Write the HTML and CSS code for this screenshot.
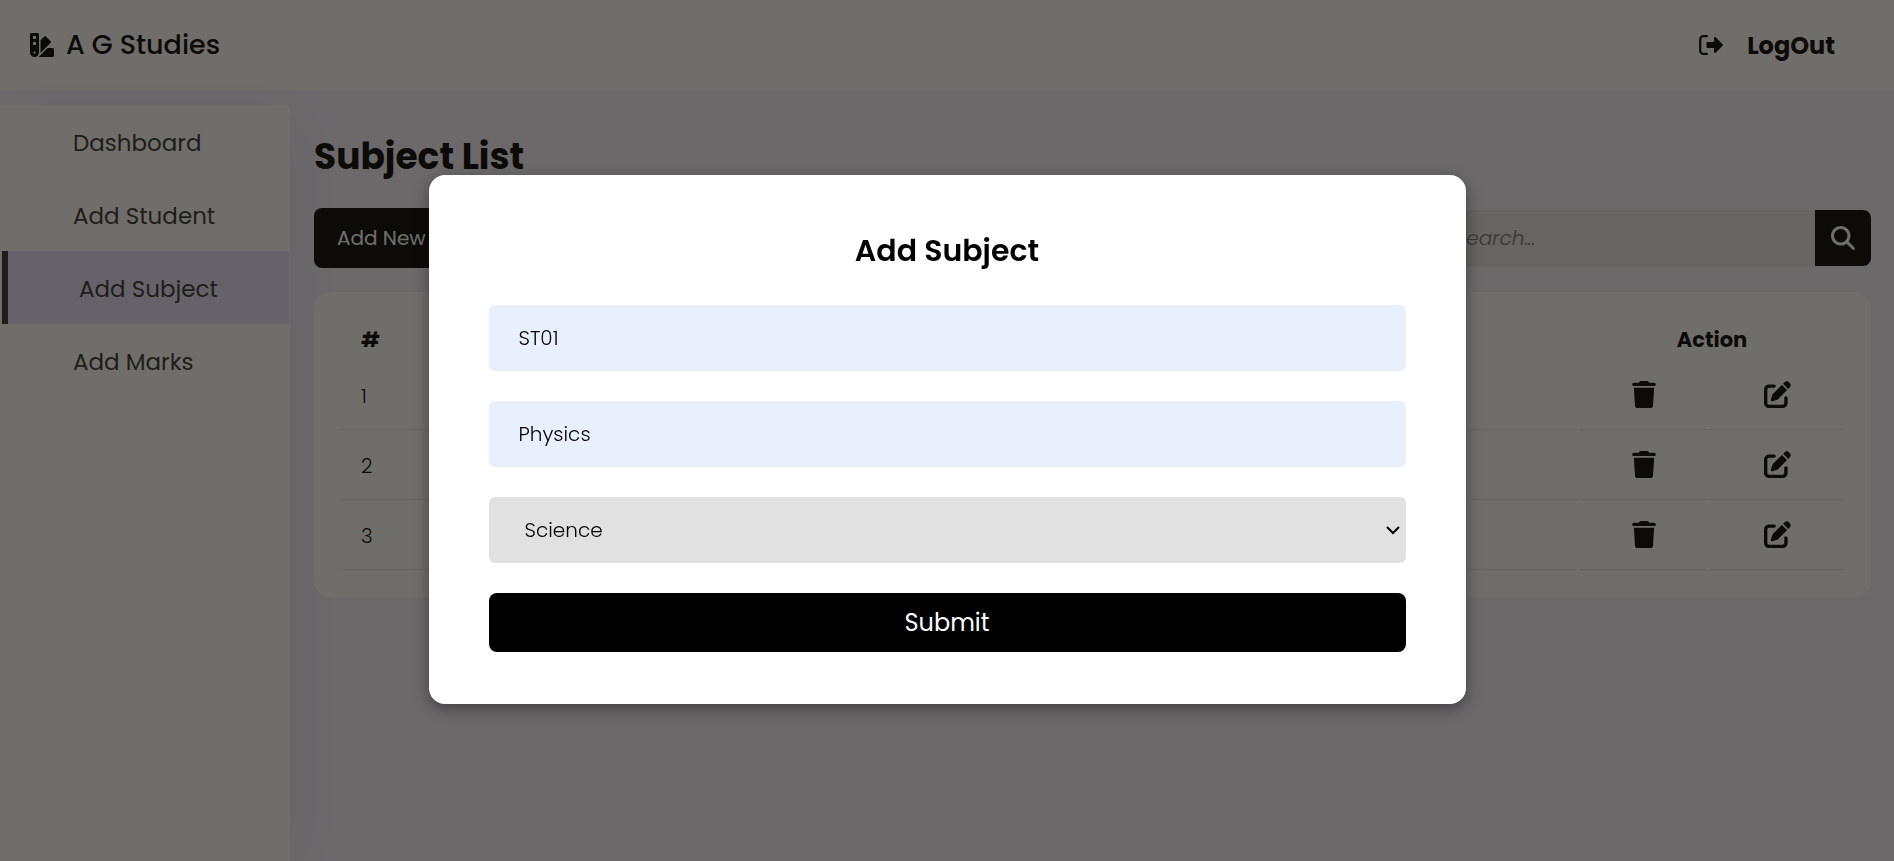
FILE: index.html
```html
<!DOCTYPE html>
<html lang="en">
<head>
<meta charset="utf-8">
<meta name="viewport" content="width=device-width, initial-scale=1">
<title>A G Studies</title>
<link rel="stylesheet" href="styles.css">
</head>
<body>
<svg class="sprite" aria-hidden="true">
  <symbol id="swatchbook" viewBox="0 0 512 512"><path d="M0 32C0 14.300 14.300 0 32 0H160c17.700 0 32 14.300 32 32V416c0 53-43 96-96 96s-96-43-96-96V32zM223.600 425.900c.3-3.300 .4-6.600 .4-9.900V154l75.400-75.400c12.500-12.500 32.800-12.500 45.300 0l90.500 90.500c12.500 12.500 12.500 32.800 0 45.300L223.600 425.900zM182.800 512l192-192H480c17.700 0 32 14.300 32 32V480c0 17.700-14.300 32-32 32H182.800zM128 64H64v64h64V64zM64 192v64h64V192H64zM96 440a24 24 0 1 0 0-48 24 24 0 1 0 0 48z"/></symbol>
  <symbol id="logout" viewBox="0 0 512 512"><path d="M505 273c9.400-9.400 9.400-24.600 0-34L361 95c-15-15-41-4.500-41 17v80H184c-13.300 0-24 10.700-24 24v80c0 13.300 10.700 24 24 24h136v80c0 21.500 26 32 41 17l144-144z"/><path d="M168 66H96a70 70 0 0 0-70 70v240a70 70 0 0 0 70 70h72" fill="none" stroke="currentColor" stroke-width="48" stroke-linecap="round"/></symbol>
  <symbol id="search" viewBox="0 0 512 512"><path d="M416 208c0 45.900-14.900 88.300-40 122.700L502.600 457.400c12.500 12.500 12.500 32.800 0 45.300s-32.800 12.500-45.300 0L330.700 376c-34.400 25.200-76.800 40-122.700 40C93.100 416 0 322.900 0 208S93.100 0 208 0S416 93.100 416 208zM208 352a144 144 0 1 0 0-288 144 144 0 1 0 0 288z"/></symbol>
  <symbol id="trash" viewBox="0 0 448 512"><path d="M135.200 17.700L128 32H32C14.300 32 0 46.300 0 64S14.300 96 32 96H416c17.700 0 32-14.300 32-32s-14.300-32-32-32H320l-7.200-14.300C307.400 6.800 296.300 0 284.200 0H163.800c-12.100 0-23.200 6.800-28.600 17.700zM416 128H32L53.200 467c1.600 25.300 22.600 45 47.900 45H346.900c25.300 0 46.300-19.700 47.900-45L416 128z"/></symbol>
  <symbol id="edit" viewBox="0 0 512 512"><path d="M471.600 21.700c-21.900-21.900-57.300-21.900-79.200 0L362.300 51.700l97.900 97.900 30.100-30.100c21.900-21.900 21.900-57.300 0-79.200L471.600 21.700zm-299.200 220c-6.100 6.100-10.800 13.600-13.500 21.900l-29.600 88.800c-2.900 8.600-.6 18.100 5.800 24.600s15.900 8.700 24.600 5.800l88.800-29.600c8.200-2.700 15.700-7.400 21.900-13.500L437.700 172.300 339.700 74.300 172.400 241.700zM96 64C43 64 0 107 0 160V416c0 53 43 96 96 96H352c53 0 96-43 96-96V320c0-17.700-14.300-32-32-32s-32 14.300-32 32v96c0 17.700-14.300 32-32 32H96c-17.700 0-32-14.300-32-32V160c0-17.700 14.300-32 32-32h96c17.700 0 32-14.300 32-32s-14.300-32-32-32H96z"/></symbol>
</svg>

<header class="topbar">
  <a class="brand" href="#"><svg class="icon"><use href="#swatchbook"/></svg><span>A G Studies</span></a>
  <a class="logout" href="#"><svg class="icon"><use href="#logout"/></svg><span>LogOut</span></a>
</header>

<div class="layout">
  <nav class="sidebar">
    <a class="nav-item" href="#">Dashboard</a>
    <a class="nav-item" href="#">Add Student</a>
    <a class="nav-item active" href="#">Add Subject</a>
    <a class="nav-item" href="#">Add Marks</a>
  </nav>

  <main class="content">
    <h1 class="page-title">Subject List</h1>
    <div class="toolbar">
      <button class="add-button" type="button">Add New</button>
      <form class="search">
        <input class="search-input" type="search" placeholder="Search..." aria-label="Search">
        <button class="search-button" type="button" aria-label="Search"><svg class="icon"><use href="#search"/></svg></button>
      </form>
    </div>
    <div class="card">
      <table class="subjects">
        <thead>
          <tr><th class="number">#</th><th class="action" colspan="2">Action</th></tr>
        </thead>
        <tbody>
          <tr>
            <td>1</td>
            <td class="delete"><button class="icon-button" type="button" aria-label="Delete"><svg class="icon-trash"><use href="#trash"/></svg></button></td>
            <td class="edit"><button class="icon-button" type="button" aria-label="Edit"><svg class="icon-edit"><use href="#edit"/></svg></button></td>
          </tr>
          <tr>
            <td>2</td>
            <td class="delete"><button class="icon-button" type="button" aria-label="Delete"><svg class="icon-trash"><use href="#trash"/></svg></button></td>
            <td class="edit"><button class="icon-button" type="button" aria-label="Edit"><svg class="icon-edit"><use href="#edit"/></svg></button></td>
          </tr>
          <tr>
            <td>3</td>
            <td class="delete"><button class="icon-button" type="button" aria-label="Delete"><svg class="icon-trash"><use href="#trash"/></svg></button></td>
            <td class="edit"><button class="icon-button" type="button" aria-label="Edit"><svg class="icon-edit"><use href="#edit"/></svg></button></td>
          </tr>
        </tbody>
      </table>
    </div>
  </main>
</div>

<div class="overlay">
  <form class="modal" role="dialog" aria-labelledby="modal-title">
    <h2 class="modal-title" id="modal-title">Add Subject</h2>
    <input class="field" type="text" value="ST01" aria-label="Subject code">
    <input class="field" type="text" value="Physics" aria-label="Subject name">
    <div class="select-wrap">
      <select class="field select" aria-label="Stream"><option>Science</option></select>
      <svg class="chevron" viewBox="0 0 14 9"><path d="M1 1l6 6 6-6"/></svg>
    </div>
    <button class="submit" type="button">Submit</button>
  </form>
</div>
</body>
</html>
```
FILE: styles.css
```css
* {
  box-sizing: border-box;
  margin: 0;
  padding: 0;
}

body {
  display: flex;
  flex-direction: column;
  gap: 15px;
  min-height: 100vh;
  background: #f6f2ff;
  color: #000;
  font-family: Poppins, Inter, sans-serif;
  font-size: 20px;
}

a {
  color: inherit;
  text-decoration: none;
}

button,
input,
select {
  border: 0;
  font: inherit;
}

.sprite {
  position: absolute;
  width: 0;
  height: 0;
}

.icon {
  width: 24px;
  height: 24px;
  fill: currentColor;
}

.topbar {
  display: flex;
  align-items: center;
  justify-content: space-between;
  height: 90px;
  padding: 0 59px 0 30px;
  background: #fff;
}

.brand,
.logout {
  display: flex;
  align-items: center;
}

.brand {
  gap: 12px;
  font-size: 27px;
  font-weight: 500;
}

.logout {
  gap: 24px;
  font-size: 24px;
  font-weight: 700;
}

.layout {
  display: flex;
  flex: 1;
  gap: 24px;
}

.sidebar {
  width: 290px;
  padding: 0 1px 0 2px;
  background: #fff;
  box-shadow: 10px 10px 60px rgba(0, 0, 80, 0.05);
}

.nav-item {
  display: flex;
  align-items: center;
  height: 73px;
  padding: 2px 0 0 71px;
  color: #333;
  font-size: 23px;
}

.nav-item.active {
  border-left: 6px solid #333;
  background: #e6e2fa;
}

.content {
  flex: 1;
  padding: 25px 23px 24px 0;
}

.page-title {
  margin-bottom: 24px;
  font-size: 36px;
  font-weight: 700;
  line-height: 54px;
}

.toolbar {
  display: flex;
  align-items: center;
  justify-content: space-between;
  margin-bottom: 24px;
}

.add-button {
  width: 160px;
  height: 60px;
  padding-left: 23px;
  border-radius: 8px;
  background: #000;
  color: #fff;
  text-align: left;
}

.search {
  display: flex;
}

.search-input {
  width: 384px;
  height: 57px;
  padding-left: 24px;
  border-radius: 8px 0 0 8px;
  background: #e7e7e5;
  font-style: italic;
  font-weight: 300;
}

.search-input::placeholder {
  color: #757575;
}

.search-button {
  display: grid;
  place-items: center;
  width: 56px;
  height: 56px;
  border-radius: 0 8px 8px 0;
  background: #000;
  color: #fff;
}

.card {
  padding: 24px;
  border-radius: 16px;
  background: #fff;
}

.subjects {
  width: 100%;
  border-spacing: 3px;
}

.subjects th {
  height: 41px;
  font-size: 21px;
  font-weight: 700;
}

.subjects td {
  height: 67px;
  padding-left: 20px;
  border-bottom: 1px solid #e4e4e4;
  font-weight: 300;
}

.subjects .number {
  padding-left: 20px;
  text-align: left;
}

.subjects .delete,
.subjects .edit {
  padding: 0 0 6px;
  text-align: center;
}

.subjects .delete {
  width: 127px;
}

.subjects .edit {
  width: 134px;
}

.icon-button {
  background: none;
  vertical-align: middle;
}

.icon-trash {
  display: block;
  width: 24px;
  height: 27px;
}

.icon-edit {
  display: block;
  width: 27px;
  height: 27px;
}

.overlay {
  position: fixed;
  inset: 0;
  display: flex;
  align-items: center;
  justify-content: center;
  padding-top: 18px;
  background: rgba(20, 18, 13, 0.61);
}

.modal {
  display: flex;
  flex-direction: column;
  gap: 30px;
  width: 55%;
  max-width: 1037px;
  padding: 52px 60px;
  border-radius: 16px;
  background: #fff;
  box-shadow: 0 5px 16px rgba(0, 0, 0, 0.4);
}

.modal-title {
  font-size: 30px;
  font-weight: 600;
  line-height: 48px;
  text-align: center;
}

.field {
  width: 100%;
  height: 66px;
  padding: 0 30px;
  border-radius: 6px;
  background: #e8f0fe;
  color: #000;
  font-weight: 300;
}

.select-wrap {
  display: grid;
  align-items: center;
}

.select-wrap > * {
  grid-area: 1 / 1;
}

.select {
  appearance: none;
  padding-left: 36px;
  background: #e1e1e1;
}

.chevron {
  justify-self: end;
  width: 14px;
  height: 9px;
  margin-right: 6px;
  fill: none;
  stroke: #000;
  stroke-width: 2;
  pointer-events: none;
}

.submit {
  height: 59px;
  border-radius: 8px;
  background: #000;
  color: #fff;
  font-size: 24px;
}
```
